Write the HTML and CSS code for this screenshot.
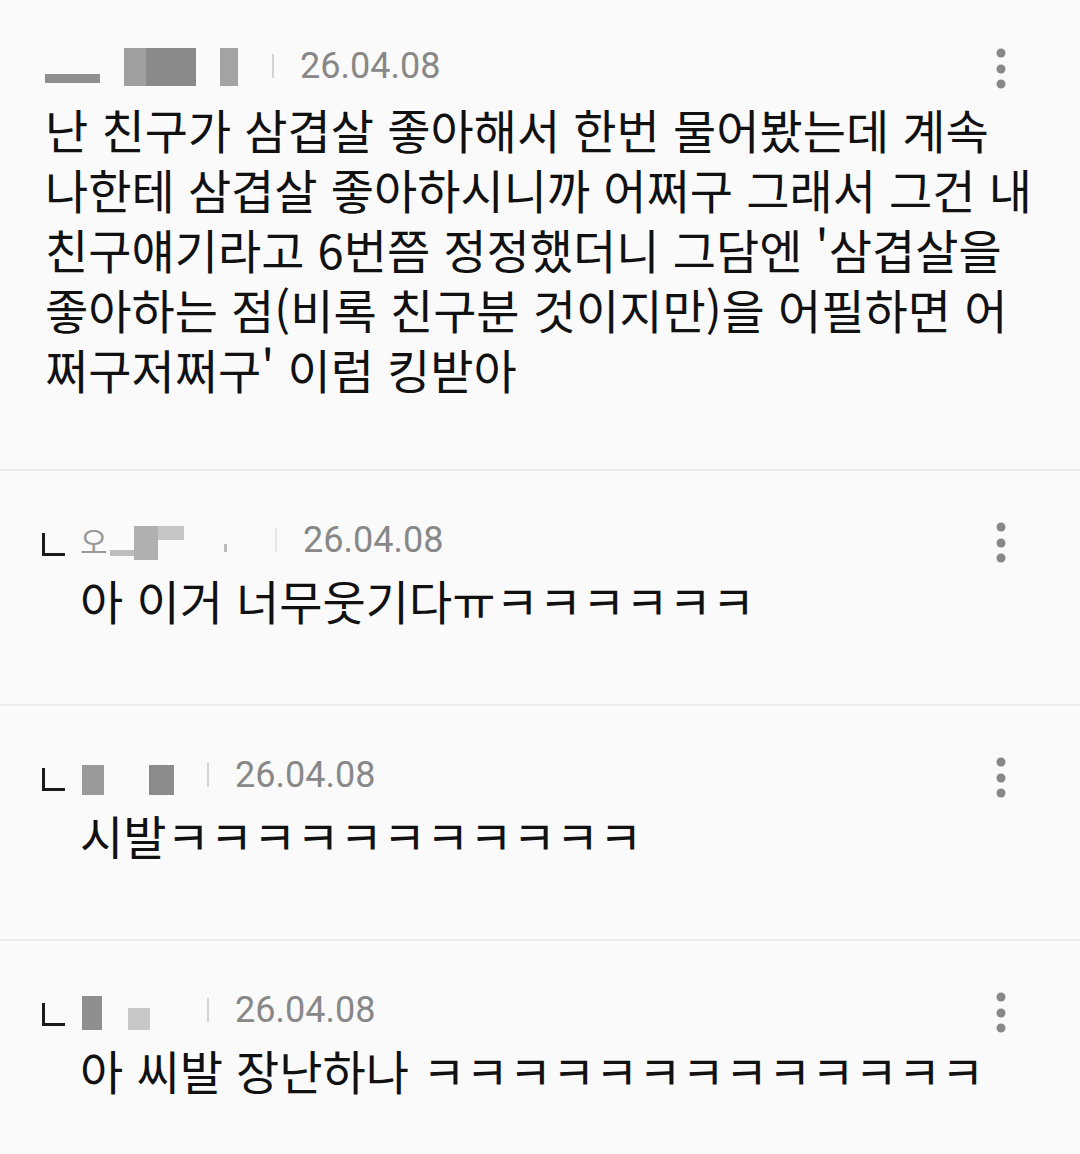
FILE: index.html
```html
<!DOCTYPE html>
<html lang="ko">
<head>
  <meta charset="UTF-8">
  <meta name="viewport" content="width=device-width, initial-scale=1.0">
  <title>댓글</title>
  <link rel="stylesheet" href="styles.css">
</head>
<body>

<div class="comment-list">

  <div class="comment">
    <div class="comment-head">
      <div class="nick nick-1">
        <span class="px px-a"></span>
        <span class="px px-b"></span>
        <span class="px px-c"></span>
        <span class="px px-e"></span>
      </div>
      <span class="bar"></span>
      <span class="date">26.04.08</span>
      <svg class="more" width="12" height="44" viewBox="0 0 12 44"><circle cx="6" cy="6" r="4.5"/><circle cx="6" cy="22" r="4.5"/><circle cx="6" cy="37" r="4.5"/></svg>
    </div>
    <p class="comment-text">난 친구가 삼겹살 좋아해서 한번 물어봤는데 계속<br>나한테 삼겹살 좋아하시니까 어쩌구 그래서 그건 내<br>친구얘기라고 6번쯤 정정했더니 그담엔 '삼겹살을<br>좋아하는 점(비록 친구분 것이지만)을 어필하면 어<br>쩌구저쩌구' 이럼 킹받아</p>
  </div>

  <div class="comment reply">
    <div class="comment-head">
      <span class="reply-mark"></span>
      <div class="nick nick-2">
        <span class="nick-char">오</span>
        <span class="px px-f"></span>
        <span class="px px-g"></span>
        <span class="px px-h"></span>
        <span class="px px-i"></span>
      </div>
      <span class="bar bar-faint"></span>
      <span class="date">26.04.08</span>
      <svg class="more" width="12" height="44" viewBox="0 0 12 44"><circle cx="6" cy="6" r="4.5"/><circle cx="6" cy="22" r="4.5"/><circle cx="6" cy="37" r="4.5"/></svg>
    </div>
    <p class="comment-text">아 이거 너무웃기다ㅠㅋㅋㅋㅋㅋㅋ</p>
  </div>

  <div class="comment reply">
    <div class="comment-head">
      <span class="reply-mark"></span>
      <div class="nick nick-3">
        <span class="px px-j"></span>
        <span class="px px-k"></span>
      </div>
      <span class="bar"></span>
      <span class="date">26.04.08</span>
      <svg class="more" width="12" height="44" viewBox="0 0 12 44"><circle cx="6" cy="6" r="4.5"/><circle cx="6" cy="22" r="4.5"/><circle cx="6" cy="37" r="4.5"/></svg>
    </div>
    <p class="comment-text">시발ㅋㅋㅋㅋㅋㅋㅋㅋㅋㅋㅋ</p>
  </div>

  <div class="comment reply">
    <div class="comment-head">
      <span class="reply-mark"></span>
      <div class="nick nick-4">
        <span class="px px-l"></span>
        <span class="px px-m"></span>
      </div>
      <span class="bar"></span>
      <span class="date">26.04.08</span>
      <svg class="more" width="12" height="44" viewBox="0 0 12 44"><circle cx="6" cy="6" r="4.5"/><circle cx="6" cy="22" r="4.5"/><circle cx="6" cy="37" r="4.5"/></svg>
    </div>
    <p class="comment-text">아 씨발 장난하나 ㅋㅋㅋㅋㅋㅋㅋㅋㅋㅋㅋㅋㅋ</p>
  </div>

</div>

</body>
</html>
```

FILE: styles.css
```css
body {
  margin: 0;
  background-color: #fafafa;
  font-family: "Noto Sans CJK KR", "Noto Sans", sans-serif;
  color: #111;
}

.comment {
  padding: 38px 30px 70px 45px;
  border-bottom: 2px solid #ececec;
}

.comment.reply {
  padding: 43px 30px 74px 42px;
}

.comment-head {
  display: flex;
  align-items: center;
  height: 56px;
}

.reply .comment-head {
  height: 52px;
}

.reply-mark {
  width: 20px;
  height: 20px;
  border-left: 3px solid #1a1a1a;
  border-bottom: 3px solid #1a1a1a;
  margin-top: 8px;
  margin-right: 15px;
}

.nick {
  display: flex;
  align-items: flex-end;
  height: 40px;
}

.nick-1 { width: 227px; }
.nick-2 { width: 195px; }
.nick-3 { width: 127px; }
.nick-4 { width: 127px; }

.px {
  display: block;
  background-color: #999;
}

.nick-char {
  font-size: 30px;
  line-height: 40px;
  color: #999;
  margin-right: 2px;
}

/* blurred nickname pieces */
.px-a { width: 55px; height: 9px; margin-bottom: 3px; background-color: #8f8f8f; margin-right: 24px; }
.px-b { width: 22px; height: 38px; background-color: #a0a0a0; }
.px-c { width: 50px; height: 38px; background-color: #8a8a8a; margin-right: 24px; }
.px-e { width: 18px; height: 38px; background-color: #a3a3a3; }

.px-f { width: 24px; height: 6px; background-color: #bdbdbd; margin-bottom: 4px; }
.px-g { width: 24px; height: 34px; background-color: #b0b0b0; }
.px-h { width: 26px; height: 14px; background-color: #c6c6c6; margin-bottom: 20px; margin-right: 40px; }
.px-i { width: 3px; height: 8px; background-color: #bbb; margin-bottom: 8px; }

.px-j { width: 22px; height: 30px; background-color: #9a9a9a; margin-left: 2px; margin-right: 45px; }
.px-k { width: 25px; height: 30px; background-color: #8c8c8c; }

.px-l { width: 20px; height: 34px; background-color: #8e8e8e; margin-left: 2px; margin-right: 26px; }
.px-m { width: 22px; height: 22px; background-color: #c8c8c8; }

.bar {
  width: 2px;
  height: 24px;
  background-color: #d4d4d4;
  margin-right: 26px;
}

.bar-faint {
  background-color: #e6e6e6;
}

.date {
  font-family: Roboto, "Liberation Sans", sans-serif;
  font-size: 36px;
  color: #888;
}

.more {
  margin-left: auto;
  margin-right: 43px;
  margin-top: 6px;
  fill: #888;
}

.comment-text {
  margin: 5px 0 0;
  font-size: 47px;
  line-height: 60px;
}

.reply .comment-text {
  margin: 4px 0 0 38px;
}
```
